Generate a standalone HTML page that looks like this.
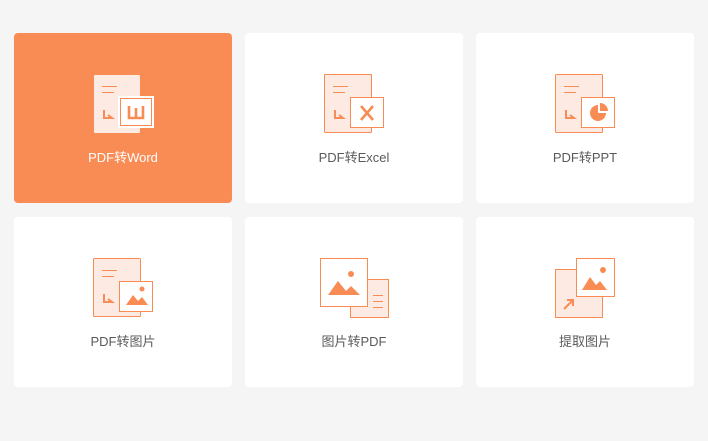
<!DOCTYPE html>
<html><head><meta charset="utf-8"><style>
html,body{margin:0;padding:0;background:#f5f5f5;width:708px;height:441px;overflow:hidden;font-family:"Liberation Sans","Noto Sans CJK SC",sans-serif}
.card{position:absolute;width:218px;height:170px;background:#fff;border-radius:4px}
.card svg{position:absolute;left:0;top:0}
.lbl{position:absolute;left:0;width:218px;top:117px;text-align:center;font-size:13px;color:#5a5a5a;line-height:16px}
.act{background:#f98b54}
.act .lbl{color:#fff}
</style></head><body>
<svg width="0" height="0" style="position:absolute">
<defs>
<g id="doc">
<rect x="0.5" y="0.5" width="47" height="58" rx="1" fill="#fdebe3" stroke="#f98b54"/>
<line x1="9" y1="12.5" x2="24" y2="12.5" stroke="#f98b54"/>
<line x1="9" y1="18.5" x2="21" y2="18.5" stroke="#f98b54"/>
<path d="M11 36v8h8l-4-3" fill="none" stroke="#f98b54" stroke-width="2"/>
</g>
</defs>
</svg>

<div class="card act" style="left:14px;top:33px">
<svg width="218" height="170"><g transform="translate(80,42)">
<rect x="0" y="0" width="46" height="58" rx="1" fill="#fdebe3"/>
<line x1="8" y1="11.5" x2="23" y2="11.5" stroke="#f98b54"/>
<line x1="8" y1="17.5" x2="20" y2="17.5" stroke="#f98b54"/>
<path d="M10 35v8h8l-4-3" fill="none" stroke="#f98b54" stroke-width="2"/>
<rect x="25" y="22" width="34" height="30" fill="#fff" stroke="#fff" stroke-width="2"/>
<rect x="26.5" y="23.5" width="31" height="27" fill="#fff" stroke="#f98b54" stroke-width="1"/>
<path d="M35 31v12h14v-12M42 33v10" fill="none" stroke="#f98b54" stroke-width="2.6"/>
</g></svg>
<div class="lbl">PDF转Word</div></div>

<div class="card" style="left:245px;top:33px">
<svg width="218" height="170"><g transform="translate(79,41)">
<use href="#doc"/>
<rect x="26.5" y="23.5" width="33" height="30" fill="#fff" stroke="#f98b54"/>
<path d="M37 32l12 14M49 32l-12 14" stroke="#f98b54" stroke-width="2.6"/>
</g></svg>
<div class="lbl">PDF转Excel</div></div>

<div class="card" style="left:476px;top:33px">
<svg width="218" height="170"><g transform="translate(79,41)">
<use href="#doc"/>
<rect x="26.5" y="23.5" width="33" height="30" fill="#fff" stroke="#f98b54"/>
<path d="M43 31a8 8 0 1 0 8 8h-8z" fill="#f98b54"/>
<path d="M45 29a8 8 0 0 1 8 8h-8z" fill="#f98b54"/>
</g></svg>
<div class="lbl">PDF转PPT</div></div>

<div class="card" style="left:14px;top:217px">
<svg width="218" height="170"><g transform="translate(79,41)">
<use href="#doc"/>
<rect x="26.5" y="23.5" width="33" height="30" fill="#fff" stroke="#f98b54"/>
<path d="M33 47l7-10 5 6 4-4 6 8z" fill="#f98b54"/>
<circle cx="49" cy="31" r="2.5" fill="#f98b54"/>
</g></svg>
<div class="lbl">PDF转图片</div></div>

<div class="card" style="left:245px;top:217px">
<svg width="218" height="170"><g transform="translate(75,41)">
<rect x="30.5" y="21.5" width="38" height="38" fill="#fdebe3" stroke="#f98b54"/>
<line x1="53" y1="37.5" x2="63" y2="37.5" stroke="#f98b54"/>
<line x1="53" y1="43.5" x2="63" y2="43.5" stroke="#f98b54"/>
<line x1="53" y1="49.5" x2="63" y2="49.5" stroke="#f98b54"/>
<rect x="0.5" y="0.5" width="47" height="48" fill="#fff" stroke="#f98b54"/>
<path d="M8 37l10-14 8 10 5-5 9 9z" fill="#f98b54"/>
<circle cx="31" cy="16" r="3" fill="#f98b54"/>
</g></svg>
<div class="lbl">图片转PDF</div></div>

<div class="card" style="left:476px;top:217px">
<svg width="218" height="170"><g transform="translate(79,41)">
<rect x="0.5" y="11.5" width="47" height="48" fill="#fdebe3" stroke="#f98b54"/>
<path d="M9 51l9-9M12 42h6v6" fill="none" stroke="#f98b54" stroke-width="2"/>
<rect x="21.5" y="0.5" width="38" height="38" fill="#fff" stroke="#f98b54"/>
<path d="M27 32l8-13 6 8 4-4 7 9z" fill="#f98b54"/>
<circle cx="48" cy="12" r="3" fill="#f98b54"/>
</g></svg>
<div class="lbl">提取图片</div></div>
</body></html>
